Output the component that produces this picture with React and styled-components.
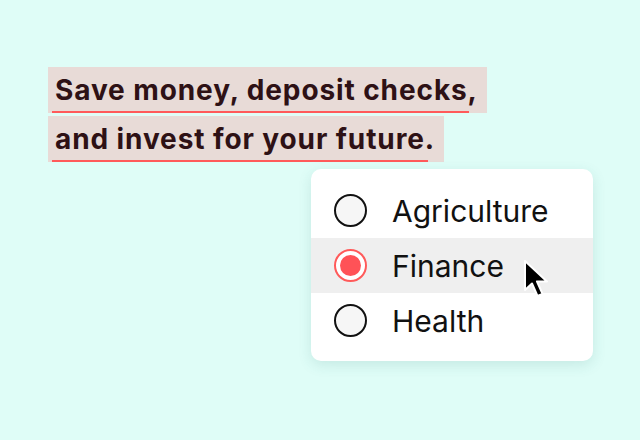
import React from "react";
import styled, { createGlobalStyle } from "styled-components";

const Global = createGlobalStyle`
  html, body { margin: 0; padding: 0; }
  body {
    background: #dffdf7;
    font-family: Inter, "Noto Sans", sans-serif;
    width: 640px;
    height: 440px;
    overflow: hidden;
  }
`;

const Page = styled.div`
  display: flex;
  flex-direction: column;
  align-items: flex-start;
  padding: 67px 0 0 48px;
`;

const Headline = styled.div`
  display: flex;
  flex-direction: column;
  align-items: flex-start;
  gap: 3px;
`;

const Line = styled.div`
  background: #e8dbd7;
  height: 46px;
  padding: 0 9px 0 7px;
  display: flex;
  align-items: center;
  font-size: 28px;
  font-weight: 700;
  color: #2e1115;
  white-space: pre;
  letter-spacing: 0.9px;
`;

const Marked = styled.span`
  position: relative;
  &::after {
    content: "";
    position: absolute;
    left: -3px;
    right: ${(p) => p.$trim}px;
    bottom: -6px;
    height: 2.5px;
    background: #ff5a5a;
  }
`;

const Card = styled.div`
  position: relative;
  margin: 7px 0 0 263px;
  width: 282px;
  padding: 14px 0 13px;
  background: #ffffff;
  border-radius: 10px;
  box-shadow: 0 4px 14px rgba(40, 110, 110, 0.14);
`;

const Row = styled.div`
  display: flex;
  align-items: center;
  gap: 25px;
  height: 55px;
  padding-left: 23px;
  background: ${(p) => (p.$active ? "#efefef" : "transparent")};
  font-size: 30px;
  color: #111111;
`;

const Radio = styled.span`
  box-sizing: border-box;
  flex: none;
  width: 33px;
  height: 33px;
  border-radius: 50%;
  border: 2px solid ${(p) => (p.$checked ? "#ff5a5a" : "#111111")};
  background: ${(p) => (p.$checked ? "#ffffff" : "#f6f6f6")};
  display: flex;
  align-items: center;
  justify-content: center;
  &::after {
    content: "";
    display: ${(p) => (p.$checked ? "block" : "none")};
    width: 21px;
    height: 21px;
    border-radius: 50%;
    background: #ff5257;
  }
`;

const Cursor = styled.svg`
  position: absolute;
  left: 213px;
  top: 91px;
  width: 28px;
  height: 40px;
`;

const options = ["Agriculture", "Finance", "Health"];

export default function App() {
  return (
    <>
      <Global />
      <Page>
        <Headline>
          <Line>
            <Marked $trim={9}>Save money, deposit checks,</Marked>
          </Line>
          <Line>
            <Marked $trim={7}>and invest for your future.</Marked>{"  "}
          </Line>
        </Headline>
        <Card>
          {options.map((o) => (
            <Row key={o} $active={o === "Finance"}>
              <Radio $checked={o === "Finance"} />
              <span>{o}</span>
            </Row>
          ))}
          <Cursor viewBox="0 0 28 40">
            <path
              d="M1 1 L1 30 L8 23.5 L13.5 36 L18.5 33.8 L13 21.5 L23 21.5 Z"
              fill="#000"
              stroke="#fff"
              strokeWidth="2"
              strokeLinejoin="round"
            />
          </Cursor>
        </Card>
      </Page>
    </>
  );
}
